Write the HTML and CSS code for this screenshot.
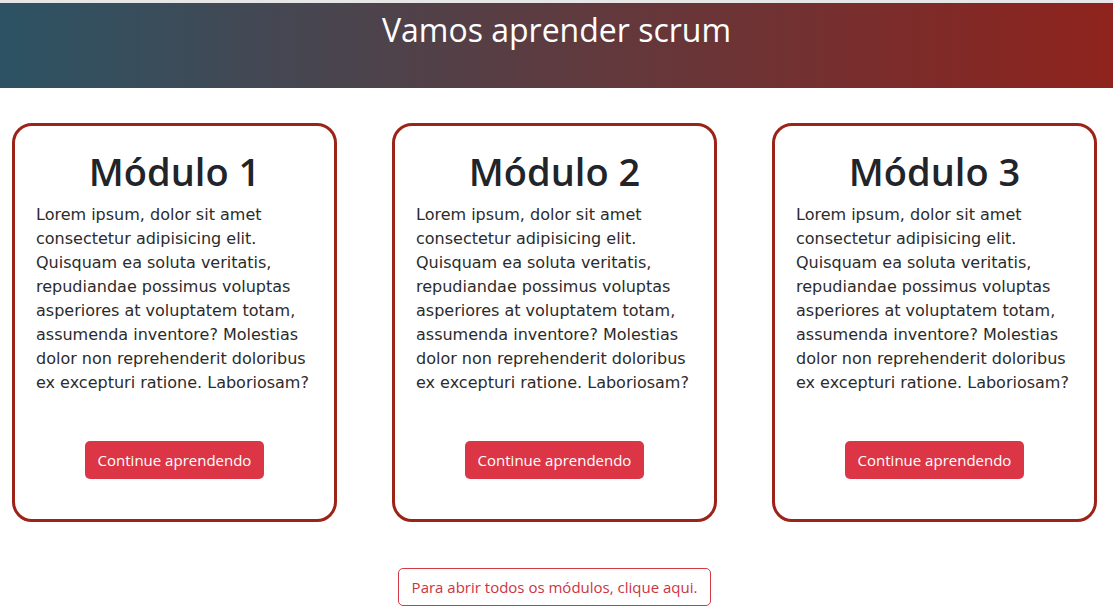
FILE: index.html
```html
<!DOCTYPE html>
<html lang="pt-BR">
<head>
<meta charset="utf-8">
<title>Vamos aprender scrum</title>
<link rel="stylesheet" href="styles.css">
</head>
<body>
<header class="topo">
  <h1 class="topo-titulo">Vamos aprender scrum</h1>
</header>
<main class="modulos">
  <section class="card">
    <h2 class="card-titulo">Módulo 1</h2>
    <p class="card-texto">Lorem ipsum, dolor sit amet consectetur adipisicing elit. Quisquam ea soluta veritatis, repudiandae possimus voluptas asperiores at voluptatem totam, assumenda inventore? Molestias dolor non reprehenderit doloribus ex excepturi ratione. Laboriosam?</p>
    <a class="btn-continuar" href="#">Continue aprendendo</a>
  </section>
  <section class="card">
    <h2 class="card-titulo">Módulo 2</h2>
    <p class="card-texto">Lorem ipsum, dolor sit amet consectetur adipisicing elit. Quisquam ea soluta veritatis, repudiandae possimus voluptas asperiores at voluptatem totam, assumenda inventore? Molestias dolor non reprehenderit doloribus ex excepturi ratione. Laboriosam?</p>
    <a class="btn-continuar" href="#">Continue aprendendo</a>
  </section>
  <section class="card">
    <h2 class="card-titulo">Módulo 3</h2>
    <p class="card-texto">Lorem ipsum, dolor sit amet consectetur adipisicing elit. Quisquam ea soluta veritatis, repudiandae possimus voluptas asperiores at voluptatem totam, assumenda inventore? Molestias dolor non reprehenderit doloribus ex excepturi ratione. Laboriosam?</p>
    <a class="btn-continuar" href="#">Continue aprendendo</a>
  </section>
</main>
<div class="rodape">
  <a class="btn-todos" href="#">Para abrir todos os módulos, clique aqui.</a>
</div>
</body>
</html>
```
FILE: styles.css
```css
* { box-sizing: border-box; }
html, body { margin: 0; padding: 0; background: #fff; }
body {
  font-family: "Open Sans", "Noto Sans", sans-serif;
  color: #212529;
  border-top: 3px solid #e6e6e6;
}
.topo {
  height: 85px;
  background: linear-gradient(to right, #2c5364, #5d3b40 50%, #8f231d);
  display: flex;
  justify-content: center;
}
.topo-titulo {
  margin: 0;
  padding-top: 7px;
  color: #fff;
  font-weight: 400;
  font-size: 32px;
  line-height: 40px;
}
.modulos {
  display: flex;
  gap: 55px;
  padding: 35px 16px 0 12px;
}
.card {
  width: 325px;
  height: 399px;
  border: 3px solid #9b2318;
  border-radius: 20px;
  padding: 22px 21px 0 21px;
  display: flex;
  flex-direction: column;
  align-items: center;
}
.card-titulo {
  margin: 0;
  font-size: 38px;
  font-weight: 600;
  line-height: 46px;
  text-align: center;
}
.card-texto {
  margin: 9px 0 0;
  font-family: "DejaVu Sans", Verdana, sans-serif;
  font-size: 16px;
  line-height: 24px;
  color: #2b2b2b;
  align-self: stretch;
}
.btn-continuar {
  margin-top: 46px;
  background: #dc3545;
  color: #fff;
  text-decoration: none;
  font-size: 15px;
  line-height: 24px;
  padding: 7px 13px;
  border-radius: 5px;
}
.rodape {
  display: flex;
  justify-content: center;
  padding: 46px 4px 0 0;
}
.btn-todos {
  border: 1px solid #d23a48;
  color: #cc3444;
  text-decoration: none;
  font-size: 15px;
  line-height: 22px;
  padding: 7px 13px;
  border-radius: 5px;
}
```
